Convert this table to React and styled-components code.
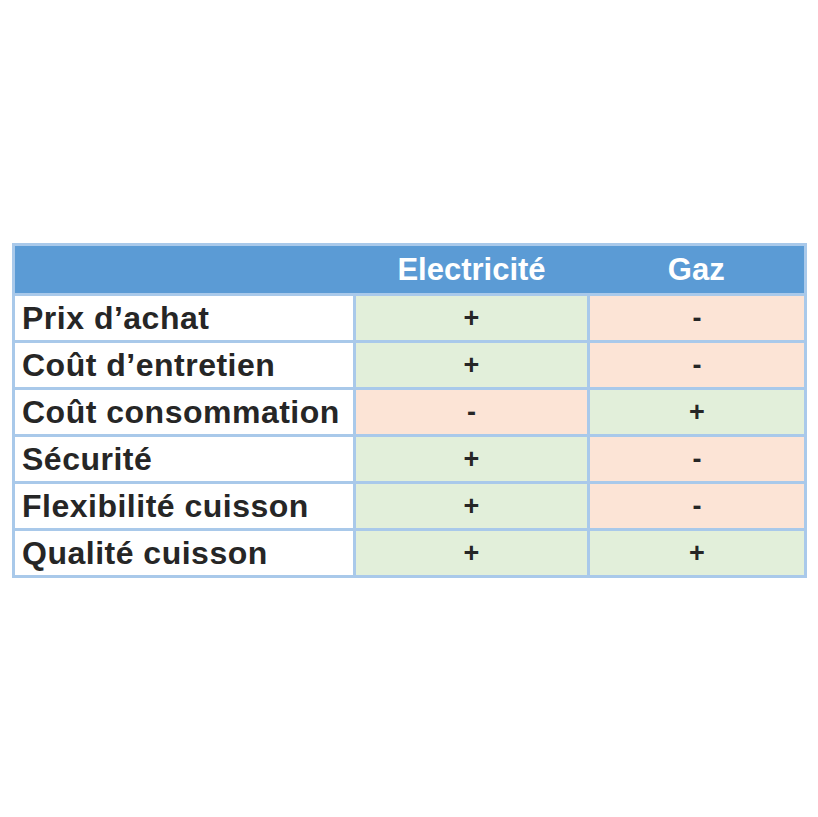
import React from "react";
import styled, { createGlobalStyle } from "styled-components";

const GlobalStyle = createGlobalStyle`
  html, body {
    margin: 0;
    padding: 0;
    background: #ffffff;
  }
  body {
    font-family: "Liberation Sans", Arial, sans-serif;
  }
`;

const rows = [
  { label: "Prix d’achat", elec: "+", gaz: "-" },
  { label: "Coût d’entretien", elec: "+", gaz: "-" },
  { label: "Coût consommation", elec: "-", gaz: "+" },
  { label: "Sécurité", elec: "+", gaz: "-" },
  { label: "Flexibilité cuisson", elec: "+", gaz: "-" },
  { label: "Qualité cuisson", elec: "+", gaz: "+" },
];

export default function App() {
  return (
    <Page>
      <GlobalStyle />
      <Table>
        <colgroup>
          <col style={{ width: 341 }} />
          <col style={{ width: 234 }} />
          <col style={{ width: 217 }} />
        </colgroup>
        <thead>
          <tr>
            <HeadCell />
            <HeadCell>Electricité</HeadCell>
            <HeadCell>Gaz</HeadCell>
          </tr>
        </thead>
        <tbody>
          {rows.map((r) => (
            <tr key={r.label}>
              <LabelCell>{r.label}</LabelCell>
              <MarkCell $good={r.elec === "+"}>{r.elec}</MarkCell>
              <MarkCell $good={r.gaz === "+"}>{r.gaz}</MarkCell>
            </tr>
          ))}
        </tbody>
      </Table>
    </Page>
  );
}

const Page = styled.div`
  padding: 243px 0 0 12px;
  width: 818px;
  height: 817px;
  box-sizing: border-box;
`;

const Table = styled.table`
  border-collapse: collapse;
  table-layout: fixed;
  width: 792px;
  border: 3px solid #a9c9ea;
`;

const HeadCell = styled.th`
  background: #5b9bd5;
  color: #ffffff;
  height: 47px;
  padding: 0;
  font-size: 31px;
  font-weight: bold;
  text-align: center;
  vertical-align: middle;
  border: 3px solid #a9c9ea;
  border-left: none;
  border-right: none;
`;

const LabelCell = styled.td`
  height: 44px;
  padding: 0 0 0 7px;
  border: 3px solid #a9c9ea;
  background: #ffffff;
  color: #262626;
  font-size: 32px;
  font-weight: bold;
  letter-spacing: 0.5px;
  white-space: nowrap;
  vertical-align: middle;
`;

const MarkCell = styled.td`
  height: 44px;
  padding: 0;
  border: 3px solid #a9c9ea;
  background: ${(p) => (p.$good ? "#e2efda" : "#fce4d6")};
  color: #262626;
  font-size: 27px;
  font-weight: bold;
  text-align: center;
  vertical-align: middle;
`;
